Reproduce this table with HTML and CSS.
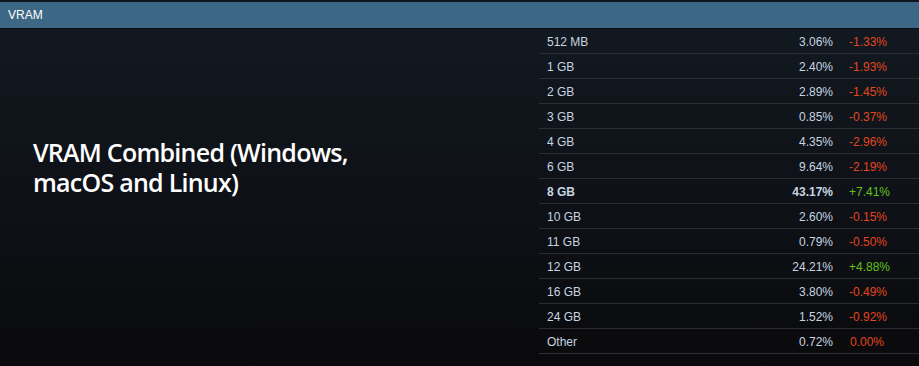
FILE: index.html
```html
<!DOCTYPE html>
<html>
<head>
<meta charset="utf-8">
<link rel="stylesheet" href="styles.css">
</head>
<body>
<div class="page">
  <div class="topline"></div>
  <div class="header">VRAM</div>
  <div class="content">
    <div class="title-col">
      <h2 class="title">VRAM Combined (Windows,<br>macOS and Linux)</h2>
    </div>
    <div class="table">
      <div class="row"><span class="label">512 MB</span><span class="pct">3.06%</span><span class="chg neg">-1.33%</span></div>
      <div class="row"><span class="label">1 GB</span><span class="pct">2.40%</span><span class="chg neg">-1.93%</span></div>
      <div class="row"><span class="label">2 GB</span><span class="pct">2.89%</span><span class="chg neg">-1.45%</span></div>
      <div class="row"><span class="label">3 GB</span><span class="pct">0.85%</span><span class="chg neg">-0.37%</span></div>
      <div class="row"><span class="label">4 GB</span><span class="pct">4.35%</span><span class="chg neg">-2.96%</span></div>
      <div class="row"><span class="label">6 GB</span><span class="pct">9.64%</span><span class="chg neg">-2.19%</span></div>
      <div class="row bold"><span class="label">8 GB</span><span class="pct">43.17%</span><span class="chg pos">+7.41%</span></div>
      <div class="row"><span class="label">10 GB</span><span class="pct">2.60%</span><span class="chg neg">-0.15%</span></div>
      <div class="row"><span class="label">11 GB</span><span class="pct">0.79%</span><span class="chg neg">-0.50%</span></div>
      <div class="row"><span class="label">12 GB</span><span class="pct">24.21%</span><span class="chg pos">+4.88%</span></div>
      <div class="row"><span class="label">16 GB</span><span class="pct">3.80%</span><span class="chg neg">-0.49%</span></div>
      <div class="row"><span class="label">24 GB</span><span class="pct">1.52%</span><span class="chg neg">-0.92%</span></div>
      <div class="row"><span class="label">Other</span><span class="pct">0.72%</span><span class="chg neg zero">0.00%</span></div>
    </div>
  </div>
</div>
</body>
</html>
```
FILE: styles.css
```css
html, body {
  margin: 0;
  padding: 0;
}
body {
  background: #0a0a0c;
  font-family: "Liberation Sans", Arial, sans-serif;
  font-size: 12px;
  color: #c7d5e0;
}
.page {
  width: 919px;
  height: 366px;
  background: linear-gradient(to bottom, #131a22 0%, #0e1117 55%, #0a0a0c 100%);
  overflow: hidden;
}
.topline {
  height: 2px;
  background: #0f151c;
}
.header {
  height: 26px;
  line-height: 26px;
  background: #3c6886;
  color: #ffffff;
  padding-left: 8px;
  font-size: 12px;
  border-bottom: 1px solid #0b0e12;
}
.content {
  display: flex;
}
.title-col {
  width: 539px;
  flex: none;
}
.title {
  margin: 0;
  padding: 108px 0 0 33px;
  font-family: "Open Sans", sans-serif;
  font-weight: 600;
  font-size: 25px;
  line-height: 30px;
  color: #ffffff;
  letter-spacing: -0.75px;
}
.table {
  flex: 1;
}
.row {
  display: flex;
  height: 24px;
  line-height: 26px;
  border-bottom: 1px solid #2a2d31;
}
.label {
  flex: 1;
  padding-left: 8px;
}
.pct {
  text-align: right;
}
.chg {
  width: 70px;
  padding-left: 16px;
  flex: none;
}
.zero {
  padding-left: 17px;
  width: 69px;
}
.bold {
  font-weight: bold;
}
.bold .chg {
  font-weight: normal;
}
.neg {
  color: #e2461f;
}
.pos {
  color: #62c21b;
}
```
